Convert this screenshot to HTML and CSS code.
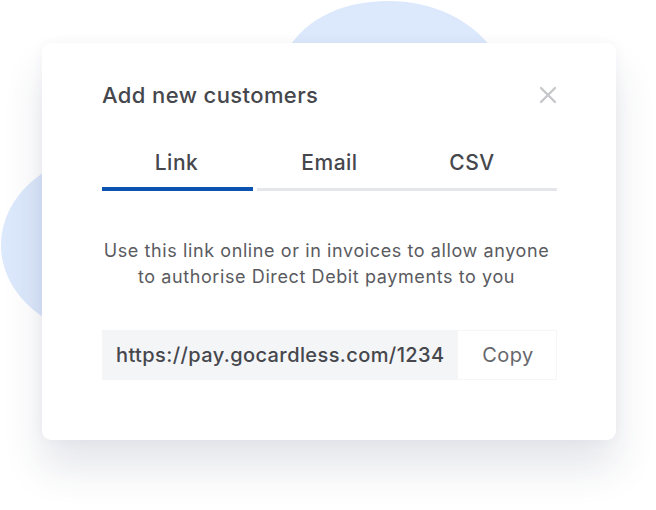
FILE: index.html
```html
<!DOCTYPE html>
<html lang="en">
<head>
<meta charset="utf-8">
<title>Add new customers</title>
<link rel="stylesheet" href="styles.css">
</head>
<body>
<div class="scene">
  <svg class="blobs" width="656" height="510" viewBox="0 0 656 510" aria-hidden="true">
    <path class="blob" d="M282 60 C300 20 340 2 385 1 C430 0 475 18 500 60 Z"/>
    <ellipse class="blob" cx="112" cy="245" rx="111" ry="92"/>
  </svg>
  <div class="card">
    <div class="card-head">
      <h1 class="title">Add new customers</h1>
      <button class="close" aria-label="Close">
        <svg width="18" height="18" viewBox="0 0 18 18"><path d="M2 2 L16 16 M16 2 L2 16" stroke="#c6c7cb" stroke-width="2.4" stroke-linecap="round"/></svg>
      </button>
    </div>
    <div class="tabs">
      <div class="tab active">Link</div>
      <div class="tab tab-email">Email</div>
      <div class="tab tab-csv">CSV</div>
    </div>
    <p class="desc">Use this link online or in invoices to allow anyone<br>to authorise Direct Debit payments to you</p>
    <div class="link-row">
      <div class="link">https://pay.gocardless.com/1234</div>
      <button class="copy">Copy</button>
    </div>
  </div>
</div>
</body>
</html>
```
FILE: styles.css
```css
* { box-sizing: border-box; }
html, body { margin: 0; padding: 0; background: #ffffff; }
body {
  width: 656px;
  height: 510px;
  overflow: hidden;
  font-family: "Inter", "Open Sans", sans-serif;
  color: #4b4c52;
}
.scene {
  position: relative;
  width: 656px;
  height: 510px;
  padding: 43px 0 0 42px;
}
.blobs {
  position: absolute;
  left: 0;
  top: 0;
}
.blob { fill: #dce8fb; }
.card {
  position: relative;
  width: 574px;
  height: 397px;
  background: #ffffff;
  border-radius: 9px;
  padding: 39px 59px 0 60px;
  box-shadow: 0 0 14px rgba(40, 50, 90, 0.04), 0 28px 40px rgba(40, 50, 90, 0.12);
}
.card-head {
  display: flex;
  justify-content: space-between;
  align-items: center;
  height: 26px;
}
.title {
  margin: 0;
  font-size: 22px;
  font-weight: 500;
  letter-spacing: 0.4px;
  line-height: 26px;
  color: #46474d;
}
.close {
  border: 0;
  background: none;
  padding: 0;
  width: 18px;
  height: 18px;
  display: flex;
}
.tabs {
  display: flex;
  margin-top: 43px;
}
.tab {
  flex: 0 0 150px;
  text-align: center;
  font-size: 21px;
  font-weight: 500;
  letter-spacing: 0.5px;
  line-height: 24px;
  padding-bottom: 12px;
  border-bottom: 3px solid #e5e6eb;
  color: #46474d;
}
.tab.active {
  flex: 0 0 151px;
  margin-right: 4px;
  padding-right: 2px;
  border-bottom: 4px solid #0b53b0;
}
.tab-email { padding-right: 5px; }
.tab-csv { padding-right: 20px; }
.desc {
  margin: 47px 0 0;
  padding-right: 6px;
  text-align: center;
  font-size: 18px;
  letter-spacing: 0.6px;
  line-height: 26px;
  color: #5a5b61;
}
.link-row {
  display: flex;
  margin-top: 40px;
  height: 50px;
}
.link {
  width: 356px;
  background: #f4f5f7;
  display: flex;
  align-items: center;
  padding-left: 14px;
  font-size: 20px;
  font-weight: 500;
  letter-spacing: 0.4px;
  color: #46474d;
}
.copy {
  flex: 1;
  border: 1px solid #f6f6f8;
  border-left: 0;
  background: #ffffff;
  font-family: inherit;
  font-size: 20px;
  letter-spacing: 0.5px;
  color: #66676c;
  padding: 0 0 0 2px;
  text-align: center;
}
```
